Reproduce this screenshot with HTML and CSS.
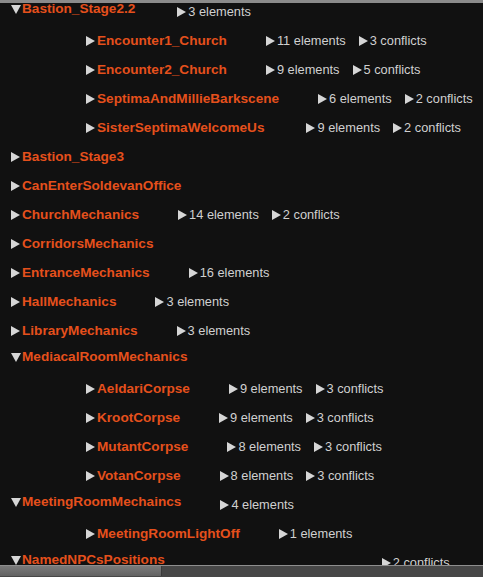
FILE: index.html
```html
<!DOCTYPE html>
<html>
<head>
<meta charset="utf-8">
<link rel="stylesheet" href="styles.css">
</head>
<body>
<div class="panel">
  <div class="topbar"></div>
  <div class="list">
    <div class="row"><span class="tri-down"></span><span class="name open">Bastion_Stage2.2</span><span class="count wide"><i class="tri"></i>3 elements</span></div>
    <div class="row child"><span class="tri-right"></span><span class="name">Encounter1_Church</span><span class="count"><i class="tri"></i>11 elements</span><span class="count"><i class="tri"></i>3 conflicts</span></div>
    <div class="row child"><span class="tri-right"></span><span class="name">Encounter2_Church</span><span class="count"><i class="tri"></i>9 elements</span><span class="count"><i class="tri"></i>5 conflicts</span></div>
    <div class="row child"><span class="tri-right"></span><span class="name">SeptimaAndMillieBarkscene</span><span class="count"><i class="tri"></i>6 elements</span><span class="count"><i class="tri"></i>2 conflicts</span></div>
    <div class="row child"><span class="tri-right"></span><span class="name">SisterSeptimaWelcomeUs</span><span class="count wide"><i class="tri"></i>9 elements</span><span class="count"><i class="tri"></i>2 conflicts</span></div>
    <div class="row"><span class="tri-right"></span><span class="name">Bastion_Stage3</span></div>
    <div class="row"><span class="tri-right"></span><span class="name">CanEnterSoldevanOffice</span></div>
    <div class="row"><span class="tri-right"></span><span class="name">ChurchMechanics</span><span class="count"><i class="tri"></i>14 elements</span><span class="count"><i class="tri"></i>2 conflicts</span></div>
    <div class="row"><span class="tri-right"></span><span class="name">CorridorsMechanics</span></div>
    <div class="row"><span class="tri-right"></span><span class="name">EntranceMechanics</span><span class="count"><i class="tri"></i>16 elements</span></div>
    <div class="row"><span class="tri-right"></span><span class="name">HallMechanics</span><span class="count"><i class="tri"></i>3 elements</span></div>
    <div class="row"><span class="tri-right"></span><span class="name">LibraryMechanics</span><span class="count"><i class="tri"></i>3 elements</span></div>
    <div class="row"><span class="tri-down"></span><span class="name open">MediacalRoomMechanics</span></div>
    <div class="row child"><span class="tri-right"></span><span class="name">AeldariCorpse</span><span class="count"><i class="tri"></i>9 elements</span><span class="count"><i class="tri"></i>3 conflicts</span></div>
    <div class="row child"><span class="tri-right"></span><span class="name">KrootCorpse</span><span class="count"><i class="tri"></i>9 elements</span><span class="count"><i class="tri"></i>3 conflicts</span></div>
    <div class="row child"><span class="tri-right"></span><span class="name">MutantCorpse</span><span class="count"><i class="tri"></i>8 elements</span><span class="count"><i class="tri"></i>3 conflicts</span></div>
    <div class="row child"><span class="tri-right"></span><span class="name">VotanCorpse</span><span class="count"><i class="tri"></i>8 elements</span><span class="count"><i class="tri"></i>3 conflicts</span></div>
    <div class="row"><span class="tri-down"></span><span class="name open">MeetingRoomMechaincs</span><span class="count"><i class="tri"></i>4 elements</span></div>
    <div class="row child"><span class="tri-right"></span><span class="name">MeetingRoomLightOff</span><span class="count"><i class="tri"></i>1 elements</span></div>
    <div class="row"><span class="tri-down"></span><span class="name open">NamedNPCsPositions</span><span class="count far"><i class="tri"></i>2 conflicts</span></div>
  </div>
  <div class="hscroll"><div class="thumb"></div></div>
</div>
</body>
</html>
```

FILE: styles.css
```css
html, body {
  margin: 0;
  padding: 0;
  background: #111111;
}
.panel {
  width: 483px;
  height: 577px;
  display: flex;
  flex-direction: column;
  overflow: hidden;
  background: #111111;
  font-family: "Liberation Sans", Arial, sans-serif;
}
.topbar {
  height: 3px;
  flex: none;
  background: #8b8b8b;
}
.list {
  flex: 1;
  overflow: hidden;
  display: flex;
  flex-direction: column;
}
.row {
  flex: none;
  height: 29px;
  box-sizing: border-box;
  padding: 0 0 0 11px;
  display: flex;
  align-items: flex-start;
  white-space: nowrap;
}
.row.child {
  padding-left: 86px;
}
.tri-right {
  flex: none;
  width: 0;
  height: 0;
  margin-top: 4px;
  border-left: 9px solid #d6d6d6;
  border-top: 5px solid transparent;
  border-bottom: 5px solid transparent;
  margin-right: 2px;
}
.tri-down {
  flex: none;
  width: 0;
  height: 0;
  margin-top: 2px;
  border-top: 9px solid #d6d6d6;
  border-left: 5px solid transparent;
  border-right: 5px solid transparent;
  margin-right: 1px;
}
.name {
  font-size: 13.6px;
  line-height: 13px;
  margin-top: 2px;
  font-weight: bold;
  color: #e5501c;
}
.name.open {
  margin-top: 0;
  line-height: 11px;
}
.count {
  display: flex;
  align-items: flex-start;
  font-size: 12.8px;
  line-height: 13px;
  margin-top: 2px;
  color: #d0d0d0;
  margin-left: 13px;
}
.tri {
  flex: none;
  width: 0;
  height: 0;
  margin-top: 2px;
  margin-right: 2px;
  border-left: 9px solid #d6d6d6;
  border-top: 5px solid transparent;
  border-bottom: 5px solid transparent;
}
.name + .count {
  margin-left: 39px;
}
.name + .count.wide {
  margin-left: 42px;
}
.name + .count.far {
  margin-left: 217px;
}
.hscroll {
  flex: none;
  height: 11px;
  background: #474747;
  border-top: 1px solid #8e8e8e;
}
.thumb {
  width: 161px;
  height: 10px;
  background: linear-gradient(#7a7a7a, #626262);
  border-right: 1px solid #3a3a3a;
}
```
